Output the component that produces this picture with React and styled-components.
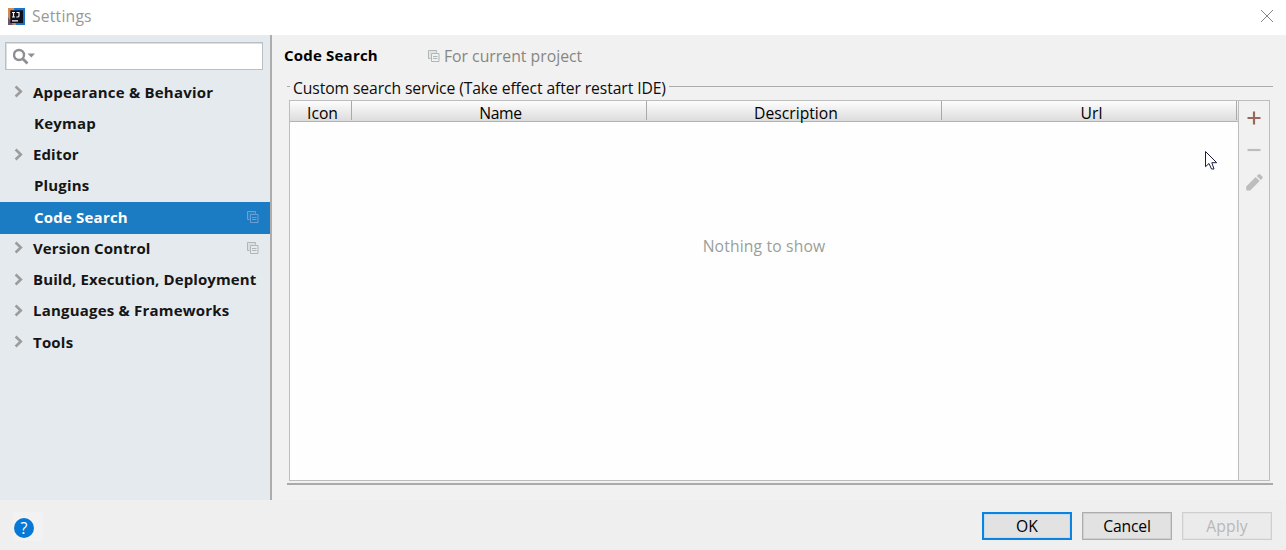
import React from "react";
import styled, { createGlobalStyle, css } from "styled-components";

const Global = createGlobalStyle`
  * { box-sizing: border-box; }
  body { margin: 0; background: #f1f1f1; font-family: "Open Sans", "Noto Sans", sans-serif; font-size: 15.7px; color: #0c0c0c; }
  svg { display: block; flex: none; }
`;

const Window = styled.div`
  display: flex;
  flex-direction: column;
  width: 1286px;
  height: 550px;
  overflow: hidden;
  position: relative;
`;

const Text = styled.span`
  white-space: nowrap;
  letter-spacing: ${(p) => p.$track || 0}px;
`;

const TitleBar = styled.header`
  height: 35px;
  flex: none;
  display: flex;
  align-items: center;
  padding: 0 12px 3px 8px;
  gap: 7px;
  background: #fff;
  color: #999;
`;

const Spacer = styled.div`
  flex: 1;
`;

const Body = styled.div`
  flex: none;
  height: 465px;
  display: flex;
`;

const Sidebar = styled.nav`
  width: 272px;
  flex: none;
  background: #e5eaee;
  border-right: 2px solid #adadad;
  padding-top: 7px;
`;

const SearchBox = styled.div`
  height: 28px;
  width: 258px;
  margin: 0 0 7px 5px;
  padding-left: 7px;
  border: 1px solid #bcbfc1;
  box-shadow: inset 1px 1px 0 #dcdfe0;
  background: #fff;
  display: flex;
  align-items: center;
`;

const TreeRow = styled.div`
  display: flex;
  align-items: center;
  height: 31.25px;
  padding: 0 11px 2.1px 14px;
  font-size: 15px;
  font-weight: 700;
  color: #151515;
  ${(p) =>
    p.$selected &&
    css`
      height: 32px;
      padding-bottom: 1.5px;
      margin-bottom: -0.75px;
      color: #fff;
      background: #1b7cc4;
    `}
`;

const ArrowSlot = styled.span`
  width: ${(p) => (p.$leaf ? 20 : 19)}px;
  flex: none;
`;

const Content = styled.main`
  flex: 1;
  min-width: 0;
  padding: 0 13px 0 15px;
`;

const Heading = styled.div`
  display: flex;
  align-items: center;
  height: 42px;
  padding-bottom: 2px;
  margin-left: -3px;
  font-size: 15px;
  font-weight: 700;
  color: #000;
`;

const Scope = styled.div`
  display: flex;
  align-items: center;
  gap: 4px;
  padding-top: 1px;
  margin-left: 50px;
  font-size: 15.8px;
  font-weight: 400;
  color: #87877f;
`;

const GroupTitle = styled.div`
  display: flex;
  align-items: center;
  height: 20px;
  gap: 3px;
`;

const Legend = styled.div`
  display: flex;
  padding-top: 1px;
`;

const Rule = styled.span`
  height: 1px;
  margin-bottom: 1px;
  background: #ababab;
  ${(p) => (p.$short ? css`width: 3px;` : css`flex: 1;`)}
`;

const TableFrame = styled.section`
  display: flex;
  margin: 3px 3px 0 2px;
  height: 381px;
  border: 1px solid #bdbdbd;
`;

const Table = styled.div`
  flex: 1;
  display: flex;
  flex-direction: column;
  background: #fefefe;
`;

const TableHead = styled.div`
  display: flex;
  height: 21px;
  flex: none;
  padding-right: 1px;
  border-bottom: 1px solid #b2b2b2;
  background: linear-gradient(#fdfdfd, #dcdcdc);
`;

const HeadCell = styled.div`
  width: ${(p) => p.$width}px;
  height: 19px;
  display: flex;
  align-items: center;
  justify-content: center;
  padding-top: 4px;
  padding-left: ${(p) => p.$nudge || 0}px;
  border-right: 1px solid #a9a9a9;
  color: #000;
`;

const Empty = styled.div`
  height: 247px;
  display: flex;
  align-items: center;
  justify-content: center;
  color: #9a9f99;
`;

const Tools = styled.div`
  width: 31px;
  flex: none;
  border-left: 1px solid #bdbdbd;
  background: #f1f1f1;
  display: flex;
  flex-direction: column;
  align-items: center;
`;

const ToolButton = styled.div`
  height: 32px;
  display: flex;
  align-items: center;
  padding-top: 2px;
`;

const BottomRule = styled.div`
  height: 2px;
  margin-top: 2px;
  background: #aaa;
`;

const Footer = styled.footer`
  flex: 1;
  background: #efefef;
  display: flex;
  align-items: center;
  padding: 2px 14px 0 13px;
  gap: 10px;
`;

const HelpPad = styled.div`
  width: 30px;
  height: 29px;
  padding: 6px 0 0 1px;
  background: #f2f2f2;
`;

const Help = styled.div`
  width: 20px;
  height: 20px;
  border-radius: 50%;
  background: #0878d7;
  color: #fff;
  display: flex;
  align-items: center;
  justify-content: center;
  font-size: 16px;
`;

const Button = styled.div`
  width: 90px;
  height: 28px;
  display: flex;
  align-items: center;
  justify-content: center;
  padding-bottom: 1px;
  background: #e2e2e2;
  border: 1px solid #adadad;
  box-shadow: inset 0 0 0 1px #cfcfcf;
  color: #000;
  ${(p) => p.$primary && css`border: 2px solid #0a84e0; box-shadow: inset 0 0 0 1px #c4dcec;`}
  ${(p) => p.$disabled && css`background: #ebebeb; border-color: #cfcfcf; color: #b8b8b8; box-shadow: inset 0 0 0 1px #e3e3e3;`}
`;

const Pointer = styled.div`
  position: absolute;
  left: 1205px;
  top: 151px;
`;

const Logo = () => (
  <svg width="17" height="17" viewBox="0 0 17 17">
    <path d="M0 0h8v17H0z" fill="#d18a55" />
    <path d="M6 0h11v17H8z" fill="#1673cf" />
    <path d="M0 9l5 8H0z" fill="#6a5670" />
    <rect x="2.300" y="2.300" width="12.700" height="12.700" fill="#10101d" />
    <path d="M4 4.500h3M5.500 4.500v4.500M4 9h3M8.500 4.500h2.500v3.200q0 1.300-1.300 1.300H8.300M4 12.800h6" stroke="#f4f4f6" strokeWidth="1.200" fill="none" />
  </svg>
);

const Close = () => (
  <svg width="14" height="14" viewBox="0 0 14 14">
    <path d="M1 1l12 12M13 1L1 13" stroke="#858585" strokeWidth="1" />
  </svg>
);

const SearchIcon = () => (
  <svg width="23" height="17" viewBox="0 0 23 17">
    <circle cx="6" cy="7" r="5" fill="none" stroke="#8e8e98" strokeWidth="2.400" />
    <path d="M9.500 10.500L14.500 15.500" stroke="#8e8e98" strokeWidth="2.800" />
    <path d="M14.500 5.500h7.500L18.300 9.500z" fill="#8e8e98" />
  </svg>
);

const Arrow = () => (
  <svg width="9" height="13" viewBox="0 0 9 13">
    <path d="M1.600 1.500L6.800 6.500L1.600 11.500" stroke="#9c9c9c" strokeWidth="2.600" fill="none" />
  </svg>
);

const ProjectIcon = ({ color = "#aeb6b6" }) => (
  <svg width="12" height="12" viewBox="0 0 12 12">
    <path d="M2.500 8.500h-2v-8h8v2M3.500 3.500h7.500v8h-7.500zM5 6.500h4.500M5 8.500h4.500" stroke={color} fill="none" />
    <path d="M2 2h7M2 2v7" stroke={color} strokeOpacity=".4" fill="none" />
  </svg>
);

const Plus = () => (
  <svg width="14" height="14" viewBox="0 0 14 14">
    <path d="M7 .5v13M.5 7h13" stroke="#96695b" strokeWidth="2.200" />
  </svg>
);

const Minus = () => (
  <svg width="14" height="14" viewBox="0 0 14 14">
    <path d="M.5 7h13" stroke="#bdbdbd" strokeWidth="2.200" />
  </svg>
);

const Pencil = () => (
  <svg width="18" height="18" viewBox="0 0 18 18">
    <path d="M1.200 17.500v-4L10.700 4l4 4L5.200 17.500zM11.700 3l1.600-1.600q1-.8 2 0l2 2q.8 1 0 2l-1.600 1.600z" fill="#bdbdbd" />
  </svg>
);

const CursorIcon = () => (
  <svg width="13" height="20" viewBox="0 0 13 20">
    <path d="M.5 .5V15.700L4 12.500L6.500 18H9L6.800 11.700H11.700z" fill="#fff" stroke="#1c1c40" />
  </svg>
);

const items = [
  { label: "Appearance & Behavior", track: 0.22 },
  { label: "Keymap", leaf: true, track: 0.2 },
  { label: "Editor", track: 0.1 },
  { label: "Plugins", leaf: true, track: 0.15 },
  { label: "Code Search", leaf: true, selected: true, project: true, track: 0.2 },
  { label: "Version Control", project: true, track: 0.07 },
  { label: "Build, Execution, Deployment", track: 0.1 },
  { label: "Languages & Frameworks", track: 0.2 },
  { label: "Tools", track: 0.2 },
];

const columns = [
  { label: "Icon", width: 62, nudge: 4 },
  { label: "Name", width: 295, nudge: 3, track: -0.3 },
  { label: "Description", width: 295, nudge: 4 },
  { label: "Url", width: 295, nudge: 5 },
];

export default function App() {
  return (
    <Window>
      <Global />
      <TitleBar>
        <Logo />
        <Text $track={0.2}>Settings</Text>
        <Spacer />
        <Close />
      </TitleBar>
      <Body>
        <Sidebar>
          <SearchBox><SearchIcon /></SearchBox>
          {items.map((it) => (
            <TreeRow key={it.label} $selected={it.selected}>
              <ArrowSlot $leaf={it.leaf}>{!it.leaf && <Arrow />}</ArrowSlot>
              <Text $track={it.track}>{it.label}</Text>
              <Spacer />
              {it.project && <ProjectIcon color={it.selected ? "#6f9fd0" : undefined} />}
            </TreeRow>
          ))}
        </Sidebar>
        <Content>
          <Heading>
            <Text $track={0.2}>Code Search</Text>
            <Scope>
              <ProjectIcon />
              <Text>For current project</Text>
            </Scope>
          </Heading>
          <GroupTitle>
            <Rule $short />
            <Legend><Text $track={-0.09}>Custom search service (Take effect after restart IDE)</Text></Legend>
            <Rule />
          </GroupTitle>
          <TableFrame>
            <Table>
              <TableHead>
                {columns.map((c) => (
                  <HeadCell key={c.label} $width={c.width} $nudge={c.nudge}>
                    <Text $track={c.track}>{c.label}</Text>
                  </HeadCell>
                ))}
              </TableHead>
              <Empty><Text $track={0.15}>Nothing to show</Text></Empty>
            </Table>
            <Tools>
              <ToolButton><Plus /></ToolButton>
              <ToolButton><Minus /></ToolButton>
              <ToolButton><Pencil /></ToolButton>
            </Tools>
          </TableFrame>
          <BottomRule />
        </Content>
      </Body>
      <Footer>
        <HelpPad><Help>?</Help></HelpPad>
        <Spacer />
        <Button $primary><Text>OK</Text></Button>
        <Button><Text $track={-0.2}>Cancel</Text></Button>
        <Button $disabled><Text $track={0.15}>Apply</Text></Button>
      </Footer>
      <Pointer><CursorIcon /></Pointer>
    </Window>
  );
}
